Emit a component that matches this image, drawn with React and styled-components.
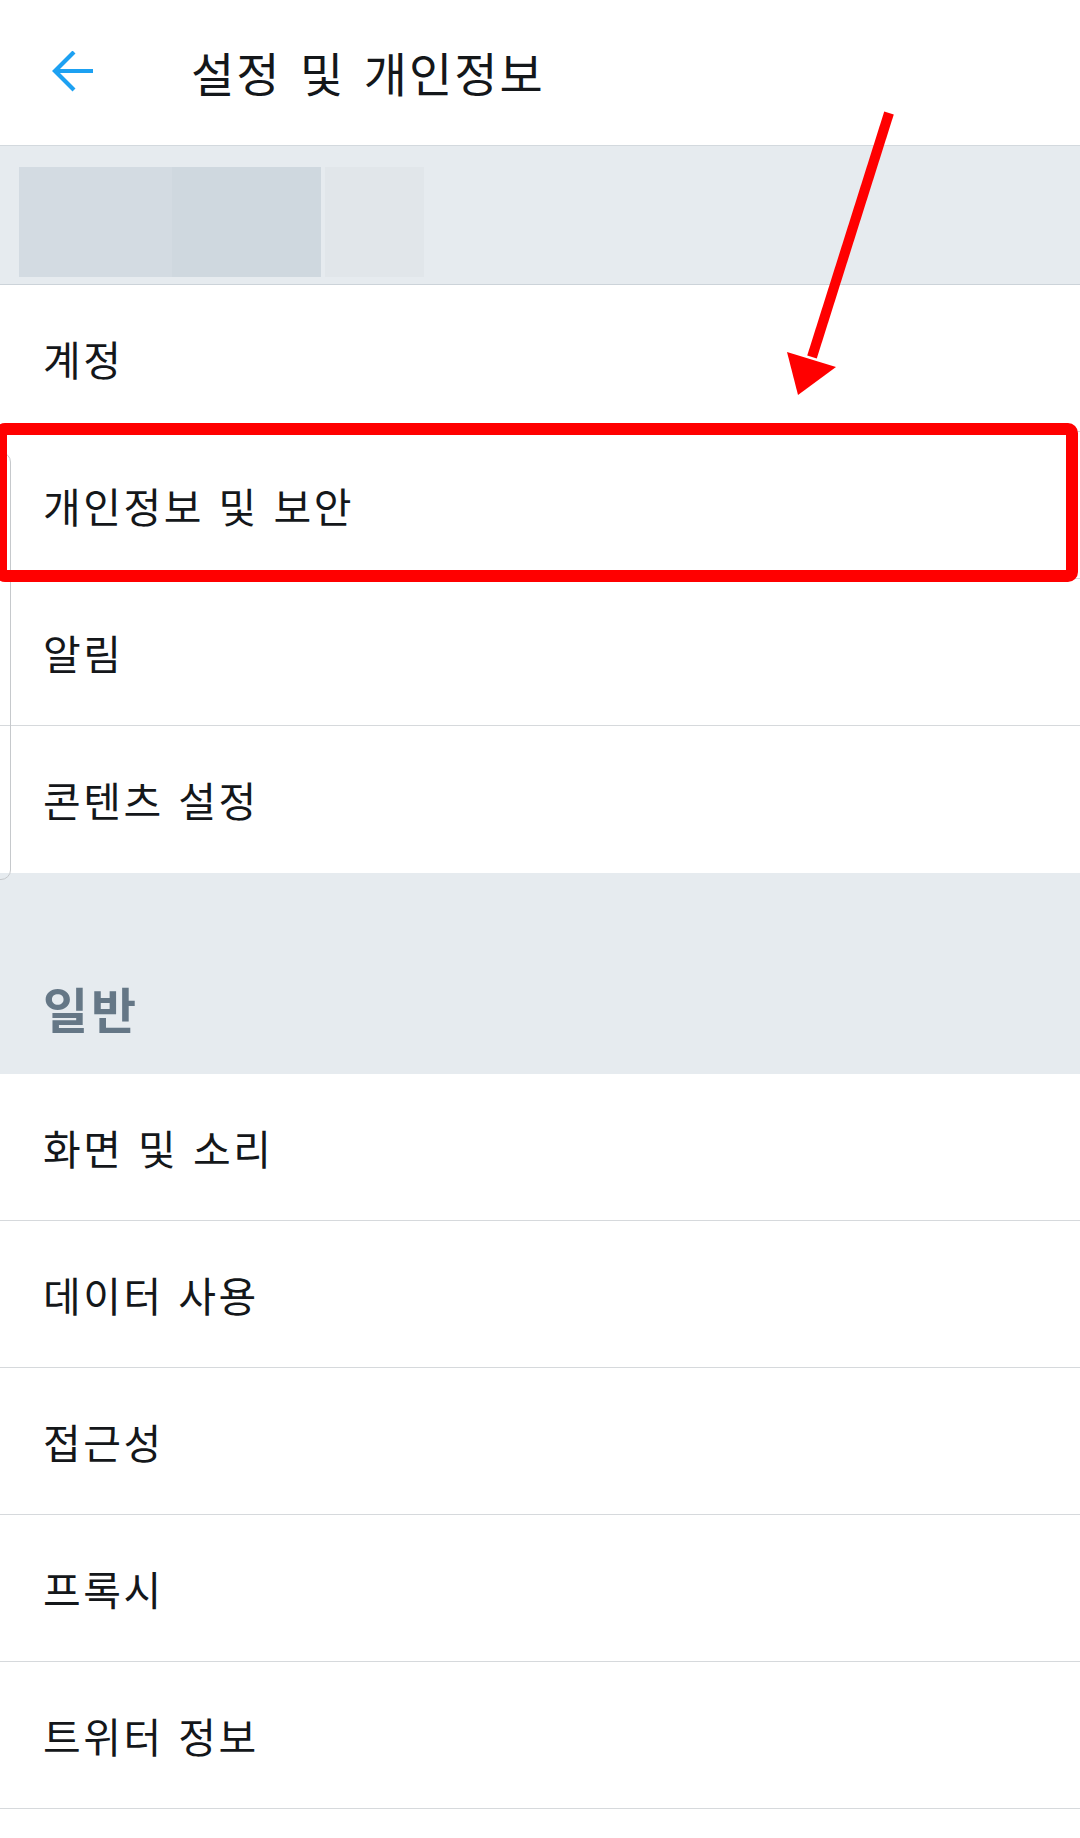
import React from "react";
import styled, { createGlobalStyle } from "styled-components";

const Global = createGlobalStyle`
  html, body { margin: 0; padding: 0; background: #ffffff; }
  body { font-family: "Noto Sans CJK KR", "Noto Sans", sans-serif; color: #14171a; }
  * { box-sizing: border-box; }
`;

const Page = styled.div`
  position: relative;
  width: 1080px;
  min-height: 1838px;
  background: #ffffff;
  overflow: hidden;
`;

const Header = styled.header`
  height: 146px;
  display: flex;
  align-items: center;
  padding-left: 52px;
  gap: 97px;
  border-bottom: 1px solid #d3d9de;
  padding-bottom: 2px;
`;

const BackButton = styled.button`
  width: 42px;
  height: 42px;
  padding: 0;
  border: none;
  background: none;
  display: flex;
  align-items: center;
  justify-content: center;
`;

const Title = styled.h1`
  margin: 0;
  font-size: 47px;
  font-weight: 400;
  line-height: 1;
  letter-spacing: 2px;
  word-spacing: 6px;
  color: #14171a;
`;

const AccountBand = styled.div`
  height: 139px;
  background: #e6ebef;
  border-bottom: 1px solid #ccd3d9;
  display: flex;
  align-items: flex-start;
  padding: 21px 19px 0;
`;

const Blur = styled.div`
  width: ${(p) => p.$w}px;
  height: 110px;
  background: ${(p) => p.$c};
  margin-left: ${(p) => p.$ml || 0}px;
`;

const List = styled.div`
  display: flex;
  flex-direction: column;
`;

const Row = styled.div`
  height: 147px;
  display: flex;
  align-items: center;
  padding-left: 43px;
  font-size: 41px;
  line-height: 1;
  letter-spacing: 2.5px;
  word-spacing: 3px;
  color: #14171a;
  border-bottom: 1px solid ${(p) => (p.$last ? "transparent" : "#d6d9dc")};
`;

const Section = styled.div`
  height: 201px;
  background: #e6ebef;
  display: flex;
  align-items: flex-end;
  padding: 0 0 42px 43px;
  font-size: 49px;
  font-weight: 700;
  line-height: 1;
  letter-spacing: 3px;
  color: #657786;
`;

const Highlight = styled.div`
  position: absolute;
  left: -5px;
  top: 423px;
  width: 1083px;
  height: 159px;
  border: 12px solid #ff0000;
  border-radius: 10px;
  pointer-events: none;
`;

const PanelEdge = styled.div`
  position: absolute;
  left: -20px;
  top: 452px;
  width: 31px;
  height: 428px;
  border: 1.5px solid #c6c9cc;
  border-radius: 10px;
  pointer-events: none;
`;

const Annotation = styled.svg`
  position: absolute;
  left: 0;
  top: 0;
  pointer-events: none;
`;

const topItems = ["계정", "개인정보 및 보안", "알림", "콘텐츠 설정"];
const generalItems = ["화면 및 소리", "데이터 사용", "접근성", "프록시", "트위터 정보"];

export default function App() {
  return (
    <>
      <Global />
      <Page>
        <Header>
          <BackButton aria-label="뒤로">
            <svg width="42" height="42" viewBox="0 0 42 42">
              <path
                d="M41 20 H3 M22 1 L3 20 L22 39"
                fill="none"
                stroke="#1da1f2"
                strokeWidth="4.2"
                strokeLinejoin="miter"
              />
            </svg>
          </BackButton>
          <Title>설정 및 개인정보</Title>
        </Header>
        <AccountBand>
          <Blur $w={153} $c="#d3dbe2" />
          <Blur $w={149} $c="#cfd8df" />
          <Blur $w={99} $c="#e1e6ea" $ml={4} />
        </AccountBand>
        <List>
          {topItems.map((t, i) => (
            <Row key={t} $last={i === topItems.length - 1}>
              {t}
            </Row>
          ))}
        </List>
        <Section>일반</Section>
        <List>
          {generalItems.map((t) => (
            <Row key={t}>{t}</Row>
          ))}
        </List>
        <PanelEdge />
        <Highlight />
        <Annotation width="1080" height="420" viewBox="0 0 1080 420">
          <line x1="889" y1="113" x2="812" y2="357" stroke="#ff0000" strokeWidth="10" />
          <polygon points="787,352 836,367 798,395" fill="#ff0000" />
        </Annotation>
      </Page>
    </>
  );
}
